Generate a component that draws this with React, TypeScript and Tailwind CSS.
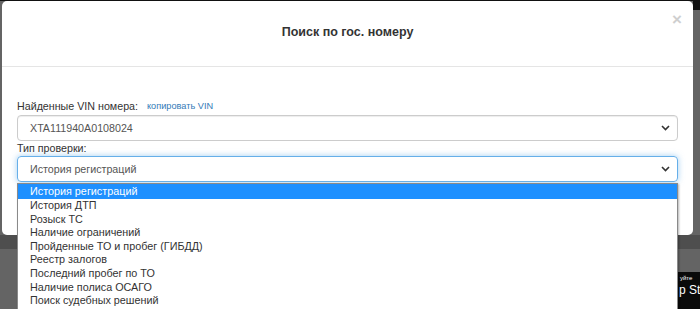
import React from "react";

const checks = [
  "История регистраций",
  "История ДТП",
  "Розыск ТС",
  "Наличие ограничений",
  "Пройденные ТО и пробег (ГИБДД)",
  "Реестр залогов",
  "Последний пробег по ТО",
  "Наличие полиса ОСАГО",
  "Поиск судебных решений",
];

function Chevron() {
  return (
    <svg width="9" height="6" viewBox="0 0 9 6" className="shrink-0">
      <path d="M1 1l3.5 3.5L8 1" fill="none" stroke="#333" strokeWidth="1.6" />
    </svg>
  );
}

export default function App() {
  return (
    <div className="relative w-[700px] h-[309px] overflow-hidden bg-[#646464] font-['Liberation_Sans',Arial,sans-serif]">
      {/* backdrop bits behind the modal */}
      <div className="absolute left-0 top-0 w-full h-[1px] bg-[#111]" />
      <div className="absolute left-0 top-[235px] w-full h-[14px] bg-[#4e4e4e]" />
      <div className="absolute right-0 top-0 w-[7px] h-[10px] bg-[#111]" />
      <div className="absolute right-0 top-[272px] w-[22px] h-[37px] bg-[#0a0a0a] text-white leading-none pl-[1px] whitespace-nowrap">
        <div className="text-[6px] pt-[3px] pl-[1px]">уйте</div>
        <div className="text-[12px] mt-[3px]">p St</div>
      </div>

      {/* Modal */}
      <div className="relative ml-[2px] mt-[1px] w-[691px] h-[234px] bg-white rounded-[5px] text-[#333]">
        <div className="relative h-[66px] border-b border-[#e5e5e5] flex items-center justify-center">
          <h4 className="text-[12.5px] font-bold text-[#333] -mt-[2px]">Поиск по гос. номеру</h4>
          <span className="absolute right-[11px] top-[10px] text-[17px] font-bold leading-none text-[#cfcfcf]">×</span>
        </div>

        <div className="px-[15px] pt-[31px]">
          <div className="h-[17px] flex items-center text-[10.7px] text-[#333]">
            <span>Найденные VIN номера:</span>
            <span className="ml-[9px] text-[9.2px] text-[#337ab7]">копировать VIN</span>
          </div>
          <div className="h-[26px] border border-[#ccc] rounded-[4px] flex items-center justify-between pl-[12px] pr-[7px] text-[10.7px] text-[#555] shadow-[inset_0_1px_1px_rgba(0,0,0,0.075)]">
            <span>XTA111940A0108024</span>
            <Chevron />
          </div>
          <div className="h-[15px] flex items-center text-[10.7px] text-[#333]">Тип проверки:</div>
          <div className="h-[26px] border border-[#66afe9] rounded-[4px] flex items-center justify-between pl-[12px] pr-[7px] text-[10.7px] text-[#555] shadow-[0_0_6px_rgba(102,175,233,0.6)]">
            <span>История регистраций</span>
            <Chevron />
          </div>
        </div>
      </div>

      {/* Open dropdown list */}
      <div className="absolute left-[17px] top-[183px] w-[661px] h-[130px] bg-white border border-[#8a8a8a] text-[10.8px] text-[#333] shadow-[1px_1px_2px_rgba(0,0,0,0.3)]">
        {checks.map((c, i) => (
          <div
            key={c}
            className={
              i === 0
                ? "h-[15px] leading-[15px] pl-[12px] bg-[#1e90ff] text-white"
                : "h-[13.6px] leading-[13.6px] pl-[12px]"
            }
          >
            {c}
          </div>
        ))}
      </div>
    </div>
  );
}
